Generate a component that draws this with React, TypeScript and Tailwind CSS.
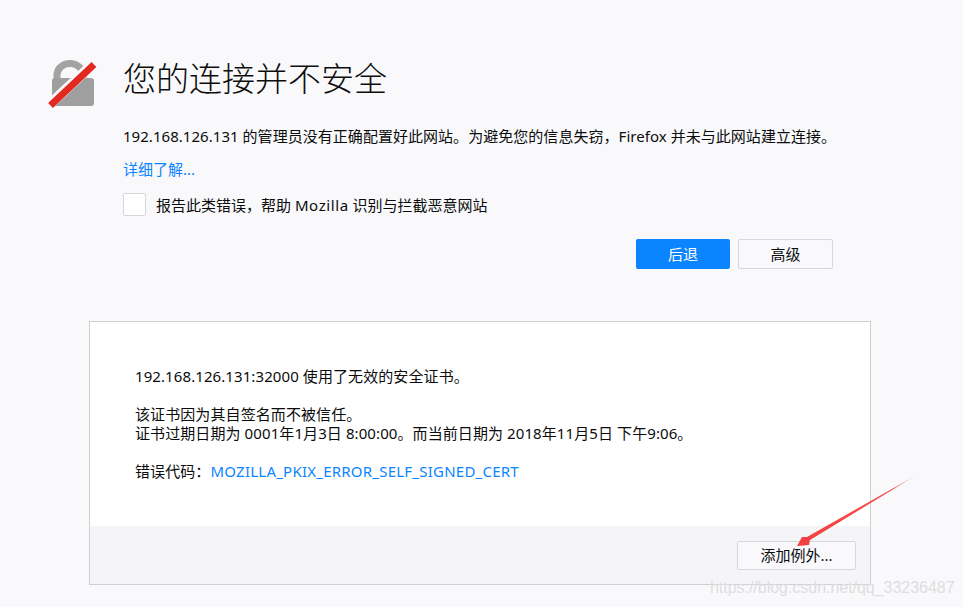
// App.tsx
const font = "font-['Noto_Sans','Noto_Sans_CJK_SC',sans-serif]";

function LockIcon() {
  return (
    <svg width="50" height="50" viewBox="0 0 50 50" className="shrink-0">
      <path d="M10 22 V15 A13 11.5 0 0 1 36 15 V22" fill="none" stroke="#a3a3a3" strokeWidth="7" />
      <rect x="5" y="18" width="42" height="28" rx="3" fill="#9f9f9f" />
      <path d="M2 45 L46 4" stroke="#f9f9fb" strokeWidth="10" />
      <path d="M3.5 45.5 L47 4.5" stroke="#e0291f" strokeWidth="7" />
    </svg>
  );
}

function Arrow() {
  return (
    <svg width="140" height="90" viewBox="0 0 140 90" className="absolute left-[790px] top-[465px]">
      <defs>
        <linearGradient id="tail" x1="130" y1="8" x2="7" y2="81" gradientUnits="userSpaceOnUse">
          <stop offset="0" stopColor="#f88" stopOpacity="0.1" />
          <stop offset="0.22" stopColor="#f4504f" />
          <stop offset="1" stopColor="#f43f3f" />
        </linearGradient>
      </defs>
      <path d="M130 8 L17 72 L12 72 L7 81 L19 80 L20 75 Z" fill="url(#tail)" />
    </svg>
  );
}

export default function App() {
  return (
    <div className={`relative w-[963px] h-[607px] overflow-hidden bg-[#f9f9fb] text-[#0c0c0d] ${font}`}>
      <div className="flex flex-col pt-[60px]">
        <div className="flex pl-[47px] gap-[26px]">
          <LockIcon />
          <div className="w-[710px]">
            <h1 className="text-[33px] leading-[37px] font-light">您的连接并不安全</h1>
            <p className="mt-[28px] text-[15px] leading-[22px] whitespace-nowrap tracking-[0.04px]">
              192.168.126.131 的管理员没有正确配置好此网站。为避免您的信息失窃，Firefox 并未与此网站建立连接。
            </p>
            <a className="block mt-[12px] text-[15px] leading-[20px] text-[#0a84ff]">详细了解...</a>
            <label className="mt-[14px] flex items-center gap-[10px] text-[15px] leading-[22px]">
              <span className="w-[23px] h-[23px] rounded-[2px] border border-[#d7d7db] bg-white" />
              <span>
                报告此类错误，帮助 <span className="tracking-[0.6px]">Mozilla</span> 识别与拦截恶意网站
              </span>
            </label>
            <div className="mt-[23px] flex justify-end gap-[8px]">
              <button className="w-[94px] h-[30px] rounded-[2px] bg-[#0a84ff] text-white text-[15px]">后退</button>
              <button className="w-[95px] h-[30px] rounded-[2px] border border-[#d7d7db] bg-[#f9f9fb] text-[15px]">高级</button>
            </div>
          </div>
        </div>

        <div className="ml-[89px] mt-[52px] w-[782px] h-[264px] flex flex-col border border-[#d0d0d3]">
          <div className="h-[204px] bg-white pt-[45px] pl-[45px] text-[15px] leading-[19px] tracking-[0.09px]">
            <p>192.168.126.131:32000 使用了无效的安全证书。</p>
            <p className="mt-[19px]">该证书因为其自签名而不被信任。</p>
            <p>证书过期日期为 0001年1月3日 8:00:00。而当前日期为 2018年11月5日 下午9:06。</p>
            <p className="mt-[19px]">
              错误代码：<a className="text-[#0a84ff] tracking-[0.23px]">MOZILLA_PKIX_ERROR_SELF_SIGNED_CERT</a>
            </p>
          </div>
          <div className="flex-1 bg-[#f5f5f7] flex justify-end items-start pt-[15px] pr-[14px]">
            <button className="w-[119px] h-[29px] rounded-[2px] border border-[#d7d7db] bg-[#f9f9fb] text-[15px]">添加例外...</button>
          </div>
        </div>
      </div>

      <Arrow />
      <span className="absolute left-[710px] top-[578px] font-['Liberation_Sans',sans-serif] text-[16px] leading-[20px] tracking-[-0.03px] text-[#dedee1] whitespace-nowrap">
        https://blog.csdn.net/qq_33236487
      </span>
    </div>
  );
}
